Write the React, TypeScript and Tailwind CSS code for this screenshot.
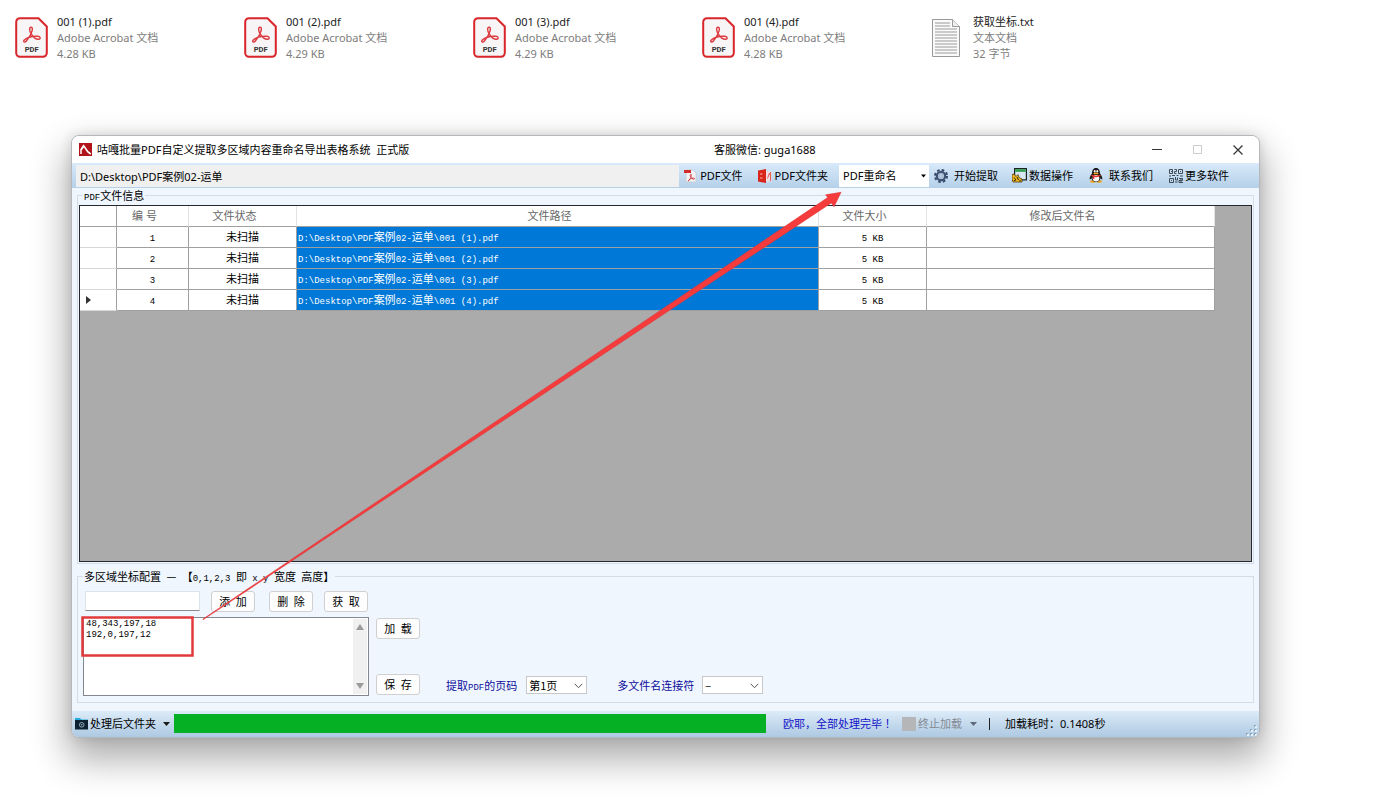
import React from "react";

const UI_FONT = "font-['Noto_Sans','Noto_Sans_CJK_SC',sans-serif]";
const SONG_FONT = "font-['Noto_Sans_CJK_SC',sans-serif]";

/* Half-width characters in the fixed-pitch face, full-width ones in the CJK face. */
function Song({ text }: { text: string }) {
  return (
    <span className={`whitespace-pre ${SONG_FONT}`}>
      {text.split(/([\x20-\x7e]+)/).map((part, i) =>
        i % 2 ? (
          <span key={i} className="font-['Liberation_Mono',monospace] text-[9px]">
            {part}
          </span>
        ) : (
          part
        ),
      )}
    </span>
  );
}

function PdfFileIcon() {
  return (
    <svg width="33" height="41" viewBox="0 0 33 41" fill="none" aria-hidden="true">
      <path d="M5 1.2h18.5L31.8 9.5V36a3.8 3.8 0 0 1-3.8 3.8H5A3.8 3.8 0 0 1 1.2 36V5A3.8 3.8 0 0 1 5 1.2Z" fill="#f7f5f5" stroke="#d9262b" strokeWidth="2" />
      <path d="M16 10.2C14 10.2 14.3 14 16.2 17C18.2 20 21.5 22.5 23.6 22.3C26 22 25.6 19.6 23 19.3C18 19 12 20.5 9.3 23C7.6 24.9 9.8 26 11.4 24C14 21 16.3 17 17.2 13.5C17.6 11.2 17.2 10.2 16 10.2Z" stroke="#dd3a40" strokeWidth="1.4" />
      <text x="16.7" y="35.3" textAnchor="middle" fontSize="7.6" fontWeight="700" fill="#333" fontFamily="Roboto, sans-serif">
        PDF
      </text>
    </svg>
  );
}

function TxtFileIcon() {
  return (
    <svg width="33" height="41" viewBox="0 0 33 41" fill="none" aria-hidden="true">
      <path d="M1.5 2.500h20l7 7v30h-27Z" fill="#fafafa" stroke="#999" />
      <path d="M21.500 2.500v7h7" fill="#eee" stroke="#999" />
      <path d="M4 6h15M4 9h15M4 12h22M4 15h22M4 18h22M4 21h22M4 24h22M4 27h22M4 30h22M4 33h22M4 36h22" stroke="#9a9a9a" />
    </svg>
  );
}

function AppIcon() {
  return (
    <svg width="13" height="13" viewBox="0 0 13 13" fill="none" aria-hidden="true">
      <rect width="13" height="13" fill="#b01318" />
      <path d="M2 11V6.500L4.500 2.500C6.500 4 7 9 11.800 11M2 7 5 3" stroke="#fff" strokeWidth="1.500" />
    </svg>
  );
}

function PdfIcon() {
  return (
    <svg width="13" height="14" viewBox="0 0 13 14" fill="none" aria-hidden="true">
      <path d="M2 1h7l3 3v9H2Z" fill="#f2f2f5" stroke="#c3c8d0" strokeWidth=".7" />
      <rect y="1" width="7" height="3" fill="#d52a2a" />
      <path d="M6.500 5.500c-1 1 .5 3 1.500 4s3 1 2.500 0S6 9 4.500 11.500s2.500-2 2.700-4.500-.2-2-.7-1.500Z" stroke="#d43c3c" strokeWidth=".9" />
    </svg>
  );
}

function PdfFolderIcon() {
  return (
    <svg width="14" height="14" viewBox="0 0 14 14" fill="none" aria-hidden="true">
      <path d="M6 2.500h7.500v10H6Z" fill="#f0dfe2" />
      <path d="M0 1.500 8 0v14l-8-1.500Z" fill="#d9261c" />
      <path d="M2 5h2.500M2 9h2.500" stroke="#f6b4a8" strokeWidth="1" />
      <path d="M9.500 9.500 11.500 4l.8 2.500M12.500 3v9" stroke="#df5550" strokeWidth=".9" />
    </svg>
  );
}

function GearIcon() {
  return (
    <svg width="14" height="14" viewBox="0 0 14 14" fill="none" aria-hidden="true">
      <circle cx="7" cy="7" r="6" stroke="#34496a" strokeWidth="2" strokeDasharray="2.600 2.112" />
      <circle cx="7" cy="7" r="4.200" fill="#cfdcec" stroke="#3d5374" strokeWidth="2.200" />
      <circle cx="7" cy="7" r="2.300" fill="#b5cbe4" stroke="#7e96b5" strokeWidth=".6" />
    </svg>
  );
}

function DataIcon() {
  return (
    <svg width="15" height="15" viewBox="0 0 15 15" fill="none" aria-hidden="true">
      <rect x="2.600" y=".6" width="11.800" height="11.300" fill="#d7e6f0" stroke="#1c2420" strokeWidth="1.200" />
      <rect x="3.200" y="1.200" width="10.600" height="2.600" fill="#2f9d4c" />
      <path d="M0 6.500 2 6l2 2.500L6 6.500l1 3 3 1.500v3H1l-1-3Z" fill="#f1b71c" stroke="#35270b" strokeWidth=".7" />
      <path d="M2 9.500 4 12m1-3 1.500 3M2 12.500h1.500M8 12v1.500" stroke="#2b210c" strokeWidth="1" />
    </svg>
  );
}

function PenguinIcon() {
  return (
    <svg width="14" height="15" viewBox="0 0 14 15" aria-hidden="true">
      <ellipse cx="4" cy="13.500" rx="3" ry="1.300" fill="#f0a21b" />
      <ellipse cx="10" cy="13.500" rx="3" ry="1.300" fill="#f0a21b" />
      <path d="M7 0C4 0 3 2.500 3 5.500 1.500 7.500.2 9.500.8 11.500c.8 0 1.200-.8 1.700-1.200C3 13 4.500 14 7 14s4-1 4.500-3.700c.5.400.9 1.200 1.700 1.200.6-2-.7-4-2.200-6C11 2.500 10 0 7 0Z" fill="#1d1a1a" />
      <ellipse cx="7" cy="10.300" rx="3.300" ry="3.200" fill="#fff" />
      <ellipse cx="5.700" cy="3.300" rx=".9" ry="1.300" fill="#fff" />
      <ellipse cx="8.300" cy="3.300" rx=".9" ry="1.300" fill="#fff" />
      <ellipse cx="7" cy="5.400" rx="2.600" ry=".9" fill="#f5a623" />
      <path d="M2.800 6.500C5 8 9 8 11.200 6.500l.5 1.500C9 9.500 5 9.500 2.300 8Z" fill="#e0322c" />
      <path d="M3.800 8.500h1.600v2.500H3.800Z" fill="#e0322c" />
    </svg>
  );
}

function QrIcon() {
  return (
    <svg width="14" height="14" viewBox="0 0 14 14" fill="none" stroke="#3d4a58" aria-hidden="true">
      <path d="M.5.5h3v4h-3ZM9.500.5h4v4h-4ZM.5 9.500h4v4h-4Z" />
      <path d="M2 2.500h1M11 2.500h1M2 11.500h1M5.500.5h2v2h-2v2h2M0 7h2M3 6.500h3M7.500 6.500h2M11 7h3M6.500 8v3h2V8.500M6 13h2.500M10 9.500h3.500v2H10v2h4M12 9v4" />
    </svg>
  );
}

function CameraFolderIcon() {
  return (
    <svg width="13" height="12" viewBox="0 0 13 12" fill="none" aria-hidden="true">
      <path d="M0 0h5l1.500 1.500H13V4H0Z" fill="#27aee0" />
      <rect y="2" width="13" height="9.500" fill="#0c2233" />
      <circle cx="6.700" cy="6.800" r="2.300" stroke="#9db8c8" strokeWidth=".9" />
      <circle cx="6.700" cy="6.800" r=".8" fill="#9db8c8" />
    </svg>
  );
}

function Caret({ className = "" }: { className?: string }) {
  return (
    <svg width="7" height="4" viewBox="0 0 7 4" className={className} aria-hidden="true">
      <path d="M0 0h7L3.500 4Z" fill="currentColor" />
    </svg>
  );
}

function Chevron() {
  return (
    <svg width="9" height="6" viewBox="0 0 9 6" fill="none" className="pointer-events-none absolute top-[7px] right-1" aria-hidden="true">
      <path d="M.7.8 4.500 4.700 8.300.8" stroke="#555" />
    </svg>
  );
}

const files = [
  { name: "001 (1).pdf", kind: "Adobe Acrobat 文档", size: "4.28 KB" },
  { name: "001 (2).pdf", kind: "Adobe Acrobat 文档", size: "4.29 KB" },
  { name: "001 (3).pdf", kind: "Adobe Acrobat 文档", size: "4.29 KB" },
  { name: "001 (4).pdf", kind: "Adobe Acrobat 文档", size: "4.28 KB" },
  { name: "获取坐标.txt", kind: "文本文档", size: "32 字节" },
];

function FileStrip() {
  return (
    <ul className="flex pt-[13px] pl-[15px] text-[11px] leading-4">
      {files.map((f) => (
        <li key={f.name} className="flex w-[229px] items-center gap-[9px]">
          {f.name.endsWith(".pdf") ? <PdfFileIcon /> : <TxtFileIcon />}
          <div className="pt-px text-[#7d7d7d]">
            <div className="text-[#222]">{f.name}</div>
            <div>{f.kind}</div>
            <div>{f.size}</div>
          </div>
        </li>
      ))}
    </ul>
  );
}

function TitleBar() {
  return (
    <header className="flex h-[27px] items-center bg-white pl-[7px]">
      <AppIcon />
      <h1 className="w-[622px] pl-[5px] whitespace-pre">咕嘎批量PDF自定义提取多区域内容重命名导出表格系统{"  "}正式版</h1>
      <span>客服微信: guga1688</span>
      <div className="ml-auto flex items-center text-[#333]">
        <button aria-label="最小化" className="flex h-6 w-10 items-center justify-center">
          <svg width="10" height="10" viewBox="0 0 10 10" fill="none" stroke="currentColor"><path d="M0 4.500h10" /></svg>
        </button>
        <button aria-label="最大化" className="flex h-6 w-10 items-center justify-center text-[#ccc]">
          <svg width="9" height="9" viewBox="0 0 9 9" fill="none" stroke="currentColor"><path d="M.5.5h8v8h-8Z" /></svg>
        </button>
        <button aria-label="关闭" className="flex h-6 w-[42px] items-center justify-center">
          <svg width="10" height="10" viewBox="0 0 10 10" fill="none" stroke="currentColor" strokeWidth="1.200"><path d="M.5.5l9 9M9.500.5l-9 9" /></svg>
        </button>
      </div>
    </header>
  );
}

function Toolbar() {
  return (
    <div className="flex h-[25px] items-center bg-linear-to-b from-[#d9eafa] to-[#b4d0e9] pr-[30px] pl-1">
      <input
        aria-label="文件夹路径"
        defaultValue="D:\Desktop\PDF案例02-运单"
        className="h-[22px] min-w-0 flex-1 bg-[#f0f0f0] px-1 outline-none"
      />
      <button className="ml-[5px] flex items-center gap-[3px]"><PdfIcon />PDF文件</button>
      <button className="ml-[15px] flex items-center gap-[3px]"><PdfFolderIcon />PDF文件夹</button>
      <div className="relative ml-[11px]">
        <select aria-label="操作类型" className="h-[22px] w-[90px] appearance-none bg-white px-1 outline-none">
          <option>PDF重命名</option>
        </select>
        <Caret className="pointer-events-none absolute top-[9px] right-[3px] w-[5px] text-black" />
      </div>
      <button className="ml-[5px] flex items-center gap-[6px]"><GearIcon />开始提取</button>
      <button className="ml-[14px] flex items-center gap-[2px]"><DataIcon />数据操作</button>
      <button className="ml-4 flex items-center gap-[6px]"><PenguinIcon />联系我们</button>
      <button className="ml-4 flex items-center gap-[2px]"><QrIcon />更多软件</button>
    </div>
  );
}

const head = "border-r border-b border-r-[#e3e3e3] border-b-[#a0a0a0] pr-4 font-normal text-[#666]";
const cell = "border-r border-b border-[#a0a0a0]";

function FileGrid() {
  return (
    <div className="mt-[3px] flex-1 border border-[#26282e] bg-[#ababab] pr-9">
      <table className="w-full table-fixed border-separate border-spacing-0 bg-white text-center leading-[14px]">
        <colgroup>
          <col className="w-[37px]" />
          <col className="w-[72px]" />
          <col className="w-[108px]" />
          <col />
          <col className="w-[108px]" />
          <col className="w-[288px]" />
        </colgroup>
        <thead>
          <tr className="h-[21px]">
            <th aria-label="行标" className={`${cell}`} />
            <th className={`${head} whitespace-pre`}>编 号</th>
            <th className={head}>文件状态</th>
            <th className={head}>文件路径</th>
            <th className={head}>文件大小</th>
            <th className={head}>修改后文件名</th>
          </tr>
        </thead>
        <tbody>
          {[1, 2, 3, 4].map((n) => (
            <tr key={n} className="h-[21px]">
              <td className="border-r border-b border-r-[#a0a0a0] border-b-[#d8d8d8]">
                {n === 4 && (
                  <svg width="5" height="8" viewBox="0 0 5 8" className="ml-[6px]" aria-hidden="true">
                    <path d="M0 0 5 4 0 8Z" fill="#333" />
                  </svg>
                )}
              </td>
              <td className={cell}><Song text={String(n)} /></td>
              <td className={cell}>未扫描</td>
              <td className={`${cell} bg-[#0078d7] pl-px text-left text-white`}>
                <Song text={`D:\\Desktop\\PDF案例02-运单\\001 (${n}).pdf`} />
              </td>
              <td className={cell}><Song text="5 KB" /></td>
              <td className={cell} />
            </tr>
          ))}
        </tbody>
      </table>
    </div>
  );
}

function GroupTitle({ text }: { text: string }) {
  return (
    <h2 className="-mt-2 ml-1 h-[14px] self-start bg-[#eff6fe] px-px leading-[14px]">
      <Song text={text} />
    </h2>
  );
}

function PushButton({ children, className = "" }: { children: string; className?: string }) {
  return (
    <button className={`h-[21px] w-11 rounded-[3px] border border-[#d0d0d0] bg-[#fdfdfd] leading-[19px] whitespace-pre ${className}`}>
      <Song text={children} />
    </button>
  );
}

function ScrollArrow({ up = false }: { up?: boolean }) {
  return (
    <svg width="8" height="6" viewBox="0 0 8 6" aria-hidden="true">
      <path d={up ? "M0 6 4 0l4 6Z" : "M0 0h8L4 6Z"} fill="#9b9b9b" />
    </svg>
  );
}

function RegionConfig() {
  return (
    <section className="mx-[5px] mt-3 flex flex-col border border-[#d3dde8] px-px pb-[6px]">
      <GroupTitle text="多区域坐标配置 — 【0,1,2,3 即 x y 宽度 高度】" />
      <div className="flex pl-1">
        <div className="w-[286px] pt-2">
          <div className="flex">
            <input aria-label="区域坐标" className="ml-[2px] h-5 w-[115px] border border-[#dde3ea] border-b-[#8a8a8a] bg-white px-1 outline-none" />
            <PushButton className="ml-[11px]">添 加</PushButton>
            <PushButton className="ml-[14px]">删 除</PushButton>
            <PushButton className="ml-[11px]">获 取</PushButton>
          </div>
          <div className="mt-[5px] flex h-[79px] border border-[#828790] bg-white p-px">
            <textarea
              aria-label="坐标列表"
              defaultValue={"48,343,197,18\n192,0,197,12"}
              className="min-w-0 flex-1 resize-none overflow-hidden pl-px font-['Liberation_Mono',monospace] text-[9px] leading-[11px] outline-none"
            />
            <div className="flex w-[14px] flex-col items-center justify-between bg-[#f0f0f0] py-[5px]">
              <ScrollArrow up />
              <ScrollArrow />
            </div>
          </div>
        </div>
        <div className="ml-[7px] flex flex-col justify-between pt-[35px] pb-px">
          <PushButton>加 载</PushButton>
          <PushButton>保 存</PushButton>
        </div>
        <div className="ml-[26px] flex items-end pb-[2px] leading-[18px] text-[#0d0d9c]">
          <label htmlFor="page" className="h-[18px]"><Song text="提取PDF的页码" /></label>
          <div className="relative ml-[9px] text-black">
            <select id="page" className={`block h-[18px] w-[61px] appearance-none border border-[#c8c8c8] bg-white px-[2px] leading-4 outline-none ${SONG_FONT}`}>
              <option>第1页</option>
            </select>
            <Chevron />
          </div>
          <label htmlFor="joiner" className="ml-[30px] h-[18px]"><Song text="多文件名连接符" /></label>
          <div className="relative ml-2 text-black">
            <select id="joiner" className={`block h-[18px] w-[61px] appearance-none border border-[#c8c8c8] bg-white px-[2px] leading-4 outline-none ${SONG_FONT}`}>
              <option>–</option>
            </select>
            <Chevron />
          </div>
        </div>
      </div>
    </section>
  );
}

function StatusBar() {
  return (
    <footer className="mt-2 flex h-[26px] items-center bg-linear-to-b from-[#dcebf8] to-[#adc9e2] pr-[2px] pl-[3px]">
      <button className="flex items-center gap-[2px]">
        <CameraFolderIcon />
        处理后文件夹
        <Caret className="ml-[5px] text-[#1a1a1a]" />
      </button>
      <div
        role="progressbar"
        aria-label="处理进度"
        aria-valuenow={100}
        className="mb-px ml-1 h-[19px] flex-1 bg-[#06b025]"
      />
      <div className="flex w-[491px] items-center pl-[17px]">
        <span className="w-[119px] whitespace-pre text-[#1414c8]">欧耶，全部处理完毕 ！</span>
        <button disabled className="flex items-center text-[#848b92]">
          <span className="mr-[2px] size-[14px] bg-[#b4b6b8]" />
          终止加载
          <Caret className="ml-2 text-[#5d6b7a]" />
        </button>
        <span className="ml-[12px] h-3 w-px bg-[#222]" />
        <span className="ml-[15px]">加载耗时：0.1408秒</span>
        <svg width="11" height="11" viewBox="0 0 11 11" className="mt-3 ml-auto" aria-hidden="true">
          <path d="M8 0h2v2H8zM4 4h2v2H4zM8 4h2v2H8zM0 8h2v2H0zM4 8h2v2H4zM8 8h2v2H8z" fill="#8da3b8" />
          <path d="M9 1h2v2H9zM5 5h2v2H5zM9 5h2v2H9zM1 9h2v2H1zM5 9h2v2H5zM9 9h2v2H9z" fill="#e8f1f9" />
        </svg>
      </div>
    </footer>
  );
}

export default function App() {
  return (
    <div className={`relative flex min-h-screen flex-col overflow-hidden bg-white text-black ${UI_FONT}`}>
      <FileStrip />
      <main className="mt-[73px] mr-[140px] mb-[73px] ml-[71px] flex flex-1 flex-col overflow-hidden rounded-lg border border-[#b4b8bc] bg-[#eff6fe] text-[11px] leading-4 shadow-[0_18px_36px_4px_rgba(0,0,0,0.32),0_0_12px_rgba(0,0,0,0.12)]">
        <TitleBar />
        <Toolbar />
        <section className="mx-[5px] mt-[7px] flex flex-1 flex-col border border-[#d3dde8] px-px pb-px">
          <GroupTitle text="PDF文件信息" />
          <FileGrid />
        </section>
        <RegionConfig />
        <StatusBar />
      </main>
      <svg width="1400" height="811" viewBox="0 0 1400 811" className="pointer-events-none absolute top-0 left-0" aria-hidden="true">
        <rect x="82.500" y="617.500" width="110" height="38" fill="none" stroke="#e23a3c" strokeWidth="2.500" />
        <path d="M203 619.800 203.400 618.800 827.700 197.500 825.700 194.800 841 192.300 834 206.800 831.300 202.900Z" fill="#f53b3b" stroke="#e0383a" strokeWidth=".6" />
      </svg>
    </div>
  );
}
